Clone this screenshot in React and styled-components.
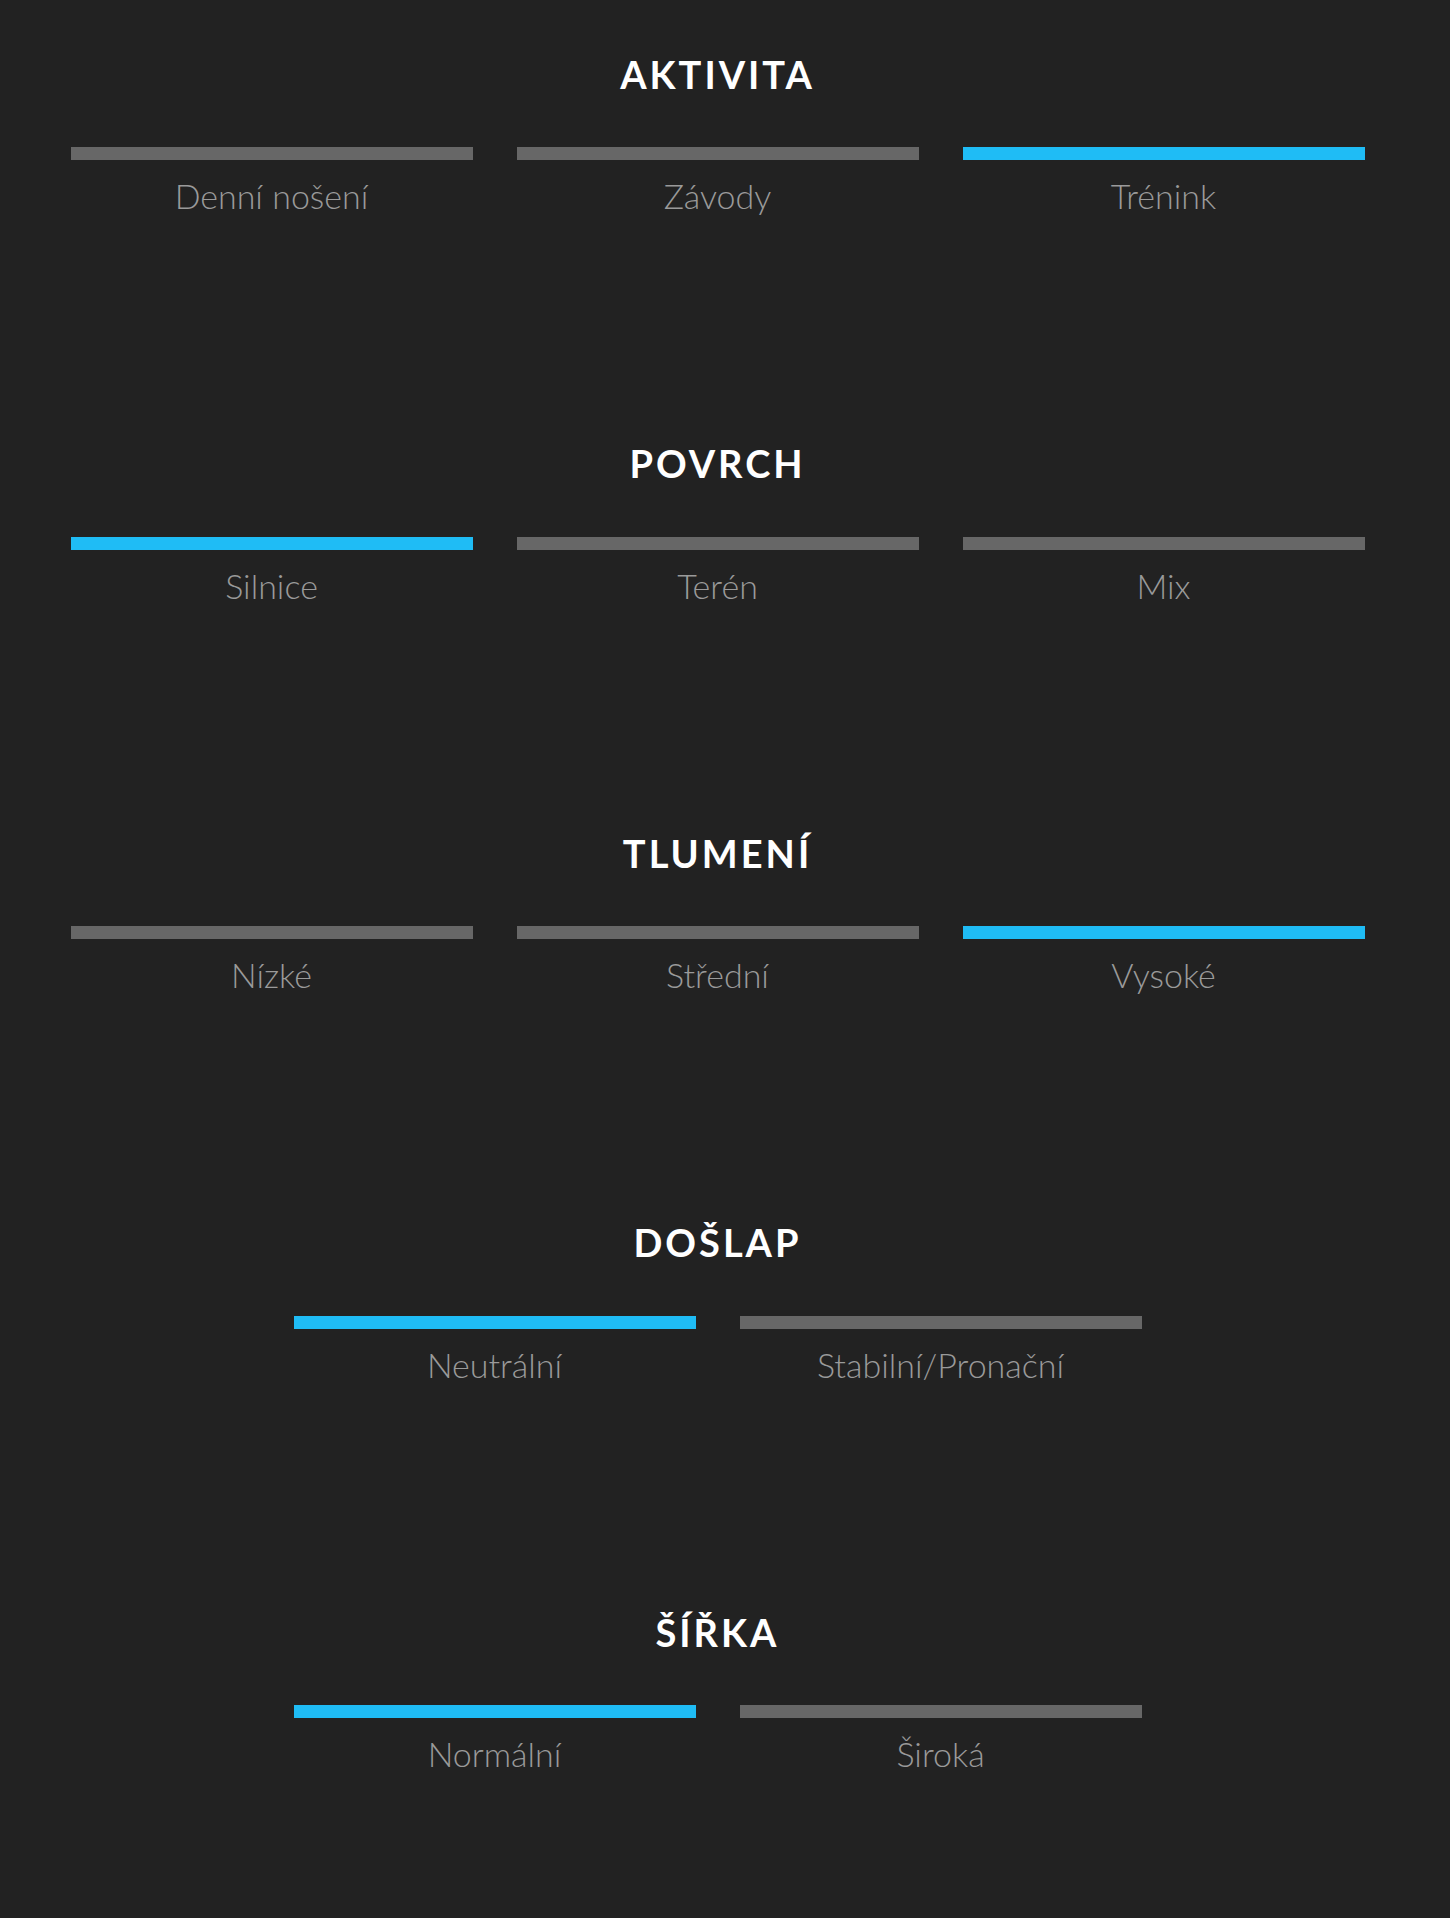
import React from 'react';
import styled, { createGlobalStyle } from 'styled-components';

const GlobalStyle = createGlobalStyle`
    html, body {
        margin: 0;
        padding: 0;
        background: #222222;
    }
    body {
        font-family: Lato, "Open Sans", sans-serif;
    }
`

const filters = [
    { title: 'AKTIVITA', options: ['Denní nošení', 'Závody', 'Trénink'], active: 2 },
    { title: 'POVRCH', options: ['Silnice', 'Terén', 'Mix'], active: 0 },
    { title: 'TLUMENÍ', options: ['Nízké', 'Střední', 'Vysoké'], active: 2 },
    { title: 'DOŠLAP', options: ['Neutrální', 'Stabilní/Pronační'], active: 0 },
    { title: 'ŠÍŘKA', options: ['Normální', 'Široká'], active: 0 },
];

function App() {
    return (
        <Page>
            <GlobalStyle/>
            <Container>
                {filters.map((f) => (
                    <Section key={f.title}>
                        <Heading>{f.title}</Heading>
                        <Options count={f.options.length}>
                            {f.options.map((o, i) => (
                                <Option key={o}>
                                    <Bar active={i === f.active}/>
                                    <Label>{o}</Label>
                                </Option>
                            ))}
                        </Options>
                    </Section>
                ))}
            </Container>
        </Page>
    )
}

export default App;

const Page = styled.div`
    width: 1450px;
    min-height: 1918px;
    background: #222222;
    padding-left: 48px;
    box-sizing: border-box;
`

const Container = styled.div`
    width: 1339px;
    padding-top: 51.5px;
    display: flex;
    flex-direction: column;
`

const Section = styled.div`
    height: 389.5px;
    display: flex;
    flex-direction: column;
    align-items: stretch;
`

const Heading = styled.h2`
    margin: 0;
    color: #ffffff;
    font-family: Lato, sans-serif;
    font-weight: 700;
    font-size: 38px;
    line-height: 44px;
    letter-spacing: 3px;
    text-align: center;
`

const Options = styled.div`
    display: grid;
    grid-template-columns: repeat(${p => p.count}, 446px);
    justify-content: center;
    margin-top: 51.5px;
`

const Option = styled.div`
    padding: 0 22px;
    display: flex;
    flex-direction: column;
    align-items: stretch;
    cursor: pointer;
`

const Bar = styled.div`
    height: 13px;
    background: ${p => p.active ? '#1fbcf5' : '#676767'};
`

const Label = styled.div`
    margin-top: 16px;
    color: #9a9a9a;
    font-family: Lato, sans-serif;
    font-weight: 300;
    font-size: 34px;
    line-height: 40px;
    text-align: center;
`
